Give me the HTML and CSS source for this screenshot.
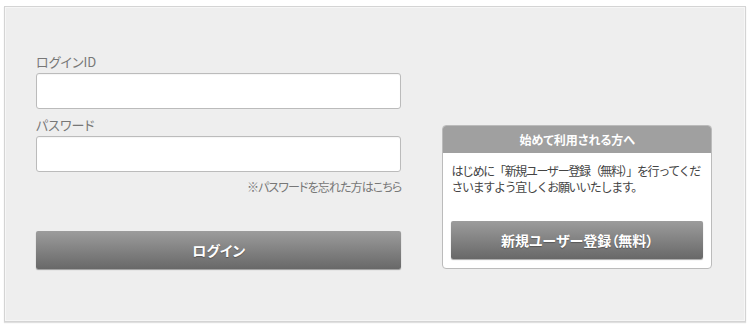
FILE: index.html
```html
<!DOCTYPE html>
<html lang="ja">
<head>
  <meta charset="UTF-8">
  <meta name="viewport" content="width=device-width, initial-scale=1.0">
  <title>ログイン</title>
  <link rel="stylesheet" href="styles.css">
</head>
<body>
  <div class="login-panel">
    <form class="login-form" id="loginForm">
      <label class="field-label" for="login-id">ログインID</label>
      <input class="field-input" type="text" id="login-id" name="login-id">

      <label class="field-label" for="password">パスワード</label>
      <input class="field-input" type="password" id="password" name="password">

      <div class="forgot"><a href="#">※パスワードを忘れた方はこちら</a></div>

      <button class="btn" type="submit">ログイン</button>
    </form>

    <div class="first-box">
      <div class="first-head">始めて利用される方へ</div>
      <div class="first-body">
        <p>はじめに「新規ユーザー登録（無料）」を行ってくださいますよう宜しくお願いいたします。</p>
        <button class="btn btn-register" type="button">新規ユーザー登録（無料）</button>
      </div>
    </div>
  </div>
</body>
</html>
```

FILE: styles.css
```css
body {
  margin: 0;
  padding: 6px 4px;
  background: #fff;
  font-family: "Noto Sans CJK JP", "Liberation Sans", sans-serif;
  font-feature-settings: "palt";
  color: #555;
}
.login-panel {
  display: flex;
  gap: 41px;
  padding: 46px 33px 0 31px;
  box-sizing: border-box;
  height: 316px;
  background: #eee;
  border: 1px solid #d4d4d4;
  box-shadow: inset 0 0 0 1px #f6f6f6, 0 1px 1px #e0e0e0;
}
.login-form {
  display: flex;
  flex-direction: column;
  width: 366px;
}
.field-label {
  font-size: 13px;
  line-height: 18px;
  color: #777;
  margin-bottom: 2px;
}
.field-input {
  height: 36px;
  box-sizing: border-box;
  border: 1px solid #bbb;
  border-radius: 3px;
  background: #fff;
  margin: 0 0 7px;
  box-shadow: inset 0 1px 1px rgba(0, 0, 0, 0.04);
}
.forgot {
  text-align: right;
  font-size: 12px;
  line-height: 16px;
  letter-spacing: -0.9px;
}
.forgot a {
  color: #777;
  text-decoration: none;
}
.btn {
  display: block;
  width: 100%;
  height: 38px;
  margin-top: 36px;
  border: none;
  border-radius: 2px;
  background: linear-gradient(#9c9c9c, #686868);
  box-shadow: 0 1px 1px rgba(0, 0, 0, 0.35);
  color: #fff;
  font-family: inherit;
  font-feature-settings: "palt";
  font-size: 14px;
  font-weight: bold;
  text-shadow: 0 1px 1px rgba(0, 0, 0, 0.3);
  cursor: pointer;
}
.first-box {
  align-self: flex-start;
  width: 270px;
  margin-top: 72px;
  box-sizing: border-box;
  background: #fff;
  border: 1px solid #bbb;
  border-radius: 4px;
  overflow: hidden;
}
.first-head {
  height: 27px;
  line-height: 27px;
  background: #a0a0a0;
  color: #fff;
  font-size: 12px;
  font-weight: bold;
  text-align: center;
}
.first-body {
  padding: 10px 8px 9px;
}
.first-body p {
  margin: 0;
  font-size: 12px;
  line-height: 16px;
  font-feature-settings: normal;
  letter-spacing: -1.35px;
  color: #444;
}
.btn-register {
  margin-top: 26px;
  font-size: 14px;
}
```
